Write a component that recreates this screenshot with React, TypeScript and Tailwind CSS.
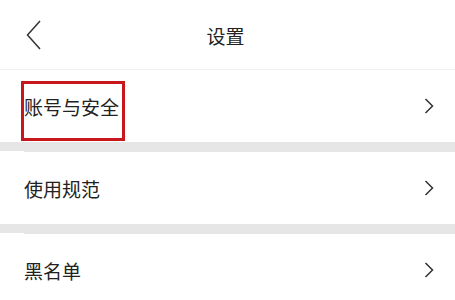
import React from "react";

function Chevron() {
  return (
    <svg width="10" height="16" viewBox="0 0 10 16" className="shrink-0">
      <polyline points="1.5,1 8.5,8 1.5,15" fill="none" stroke="#333" strokeWidth="1.5" />
    </svg>
  );
}

function Row({ label, first, highlight }: { label: string; first?: boolean; highlight?: boolean }) {
  return (
    <div className="relative bg-white pl-6">
      <div
        className={
          first
            ? "h-[72px] flex items-center justify-between pr-[21px]"
            : "h-[73px] border-t border-[#e6e6e6] flex items-center justify-between pr-[21px]"
        }
      >
        <span className="text-[19px] leading-none text-[#222]">{label}</span>
        <Chevron />
      </div>
      {highlight && (
        <div className="absolute left-[21px] top-[11px] w-[104px] h-[60px] border-[3px] border-[#c8171c]" />
      )}
    </div>
  );
}

export default function App() {
  return (
    <div
      className="w-[455px] h-[300px] overflow-hidden bg-white"
      style={{ fontFamily: '"Noto Sans CJK SC", "Noto Sans", sans-serif' }}
    >
      <div className="h-[70px] border-b border-[#f2f2f2] flex items-center relative">
        <div className="pl-[26px] flex items-center">
          <svg width="16" height="30" viewBox="0 0 16 30">
            <polyline points="14,1 1.5,15 14,29" fill="none" stroke="#333" strokeWidth="1.5" />
          </svg>
        </div>
        <div className="absolute inset-x-0 top-0 h-[70px] flex items-center justify-center pointer-events-none">
          <span className="text-[19px] leading-none text-[#222] -translate-x-[2px]">设置</span>
        </div>
      </div>
      <Row label="账号与安全" first highlight />
      <div className="h-[9px] bg-[#e6e6e6]" />
      <Row label="使用规范" />
      <div className="h-[9px] bg-[#e6e6e6]" />
      <Row label="黑名单" />
    </div>
  );
}
